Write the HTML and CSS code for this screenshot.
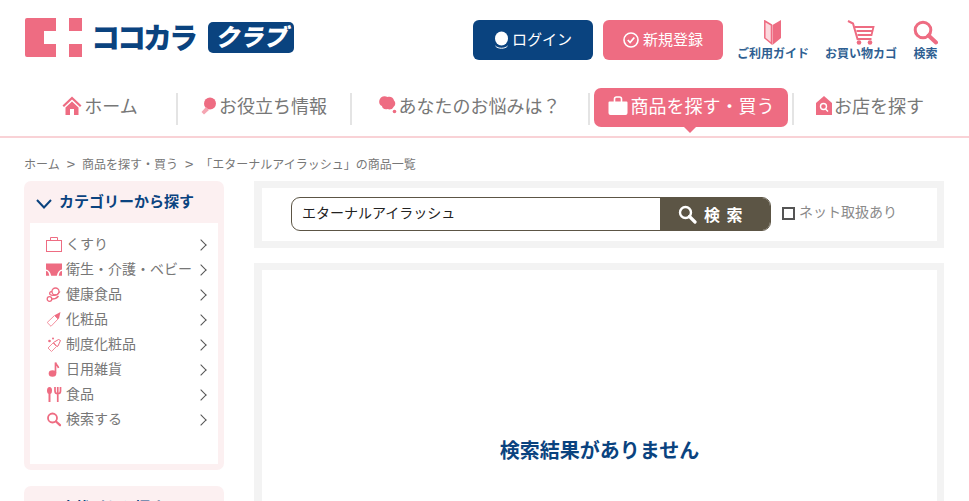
FILE: index.html
```html
<!DOCTYPE html>
<html lang="ja">
<head>
<meta charset="utf-8">
<title>ココカラクラブ</title>
<link rel="stylesheet" href="styles.css">
</head>
<body>
<header class="top">
  <a class="logo">
    <svg class="logo-mark" width="57" height="39" viewBox="0 0 57 39"><path d="M2 0H31V13H19V26H31V39H2a2 2 0 0 1-2-2V2a2 2 0 0 1 2-2z" fill="#ee6c82"/><rect x="44" y="0" width="13" height="13" fill="#ee6c82"/><rect x="44" y="26" width="13" height="13" fill="#ee6c82"/></svg>
    <span class="logo-text">ココカラ</span>
    <span class="logo-badge">クラブ</span>
  </a>
  <div class="top-actions">
    <a class="btn btn-login"><svg width="15" height="19" viewBox="0 0 15 19"><ellipse cx="7.500" cy="7.500" rx="6.500" ry="7" fill="#fff"/><path d="M1.500 15c2.500 3 9.500 3 12 0" stroke="#fff" fill="none"/></svg><span class="btn-text">ログイン</span></a>
    <a class="btn btn-register"><svg width="16" height="16" viewBox="0 0 16 16"><circle cx="8" cy="8" r="7" fill="none" stroke="#fff" stroke-width="1.600"/><path d="M4.800 8l2.300 2.500 4.200-5" fill="none" stroke="#fff" stroke-width="1.800"/></svg><span class="btn-text">新規登録</span></a>
    <a class="tool"><svg width="17" height="25" viewBox="0 0 17 25"><path d="M0.800 1l6.700 4v18.500l-6.700-5.500z" fill="#fbd9de" stroke="#ee6c82" stroke-width="1.500"/><path d="M8.500 5L17 0v18l-8.500 7z" fill="#ee6c82"/></svg><span>ご利用ガイド</span></a>
    <a class="tool"><svg width="28" height="25" viewBox="0 0 28 25"><path d="M1 1l5 2.500 4.500 15.500h14" fill="none" stroke="#ee6c82" stroke-width="2"/><path d="M8 7h18.500l-2 8H10.500M9.500 11h15.500" fill="none" stroke="#ee6c82" stroke-width="1.800"/><circle cx="12" cy="22.500" r="2.300" fill="#ee6c82"/><circle cx="23" cy="22.500" r="2.300" fill="#ee6c82"/></svg><span>お買い物カゴ</span></a>
    <a class="tool"><svg width="25" height="25" viewBox="0 0 25 25"><circle cx="10" cy="10" r="7.800" fill="none" stroke="#ee6c82" stroke-width="3"/><path d="M15.500 15.500l7.500 7" stroke="#ee6c82" stroke-width="4" stroke-linecap="round"/></svg><span>検索</span></a>
  </div>
</header>
<nav class="gnav">
  <a class="gnav-item nav-home"><svg width="20" height="20" viewBox="0 0 20 20"><path d="M10 0.500L0.500 9.500l1.500 1.500L10 3.500l8 7.500 1.500-1.500z" fill="#ee6c82"/><path d="M3.500 11.500V19H8v-6h4v6h4.500v-7.500L10 5.500z" fill="#ee6c82"/></svg><span class="nav-text">ホーム</span></a>
  <a class="gnav-item nav-info"><svg width="18" height="20" viewBox="0 0 18 20"><circle cx="11" cy="7.500" r="6" fill="#ee6c82"/><path d="M7 11l3 3-5 4.500-2.500-2.500z" fill="#f5a5b2"/></svg><span class="nav-text">お役立ち情報</span></a>
  <a class="gnav-item nav-worry"><svg width="19" height="20" viewBox="0 0 19 20"><path d="M3 1.500C5 0 7.500 0 9.500 1c3-1 6 0.500 6.500 3.500 2 2 1.500 5-0.500 6.500-1 2.500-4 3-6 2-3 1-5.500-1-5.500-3C1 9 0 4.500 3 1.500z" fill="#ee6c82"/><circle cx="16.500" cy="15.500" r="1.800" fill="#ee6c82"/></svg><span class="nav-text">あなたのお悩みは？</span></a>
  <a class="gnav-item nav-current"><svg width="20" height="19" viewBox="0 0 20 19"><path d="M1.500 5.500h17a1 1 0 0 1 1 1V17a2 2 0 0 1-2 2h-15a2 2 0 0 1-2-2V6.500a1 1 0 0 1 1-1z" fill="#fff"/><path d="M6.500 6V3a2 2 0 0 1 2-2h3a2 2 0 0 1 2 2v3" fill="none" stroke="#fff" stroke-width="1.600"/></svg><span class="nav-text">商品を探す・買う</span></a>
  <a class="gnav-item nav-shop"><svg width="16" height="19" viewBox="0 0 16 19"><path d="M8 0L16 7v12H0V7z" fill="#ee6c82"/><circle cx="7.500" cy="10.500" r="3" fill="none" stroke="#fff" stroke-width="1.400"/><path d="M9.500 13l2.500 2.500" stroke="#fff" stroke-width="1.400"/></svg><span class="nav-text">お店を探す</span></a>
</nav>
<p class="crumbs"><span>ホーム</span><span class="crumb-sep">&gt;</span><span>商品を探す・買う</span><span class="crumb-sep">&gt;</span><span>「エターナルアイラッシュ」の商品一覧</span></p>
<div class="columns">
  <aside class="side">
    <section class="panel">
      <h2 class="panel-title"><svg width="16" height="10" viewBox="0 0 16 10"><path d="M1 1l7 7.500L15 1" fill="none" stroke="#0a437f" stroke-width="2"/></svg><span class="panel-text">カテゴリーから探す</span></h2>
      <ul class="cat-list">
        <li class="cat"><svg width="16" height="15" viewBox="0 0 16 15"><rect x="0.500" y="3.500" width="15" height="11" fill="none" stroke="#ee6c82"/><path d="M4.500 3.500V0.500h7v3" fill="none" stroke="#ee6c82"/></svg><span class="cat-label">くすり</span><i class="chev"></i></li>
        <li class="cat"><svg width="16" height="14" viewBox="0 0 17 14"><path d="M0 0h17v6.500c-2.500 0-4.500 2.500-5.500 6.500h-6C4.500 9 2.500 6.500 0 6.500z" fill="#ee6c82"/><path d="M0 8c2 0 3 2 3.500 5H0zM17 8c-2 0-3 2-3.500 5H17z" fill="#ee6c82"/></svg><span class="cat-label">衛生・介護・ベビー</span><i class="chev"></i></li>
        <li class="cat"><svg width="16" height="15" viewBox="0 0 16 15"><circle cx="9.500" cy="4.500" r="3.500" fill="none" stroke="#ee6c82" stroke-width="1.300"/><path d="M6 4.500c-2 0.500-3 1-2 3 2 1.500 7 1.500 10-3" fill="none" stroke="#ee6c82" stroke-width="1.300"/><circle cx="3.500" cy="12" r="2.300" fill="none" stroke="#ee6c82" stroke-width="1.300"/><path d="M6 12c3 0 5-1 6.500-3" fill="none" stroke="#ee6c82" stroke-width="1.300"/></svg><span class="cat-label">健康食品</span><i class="chev"></i></li>
        <li class="cat"><svg width="16" height="15" viewBox="0 0 15 15"><path d="M0.700 10.500L8 3.500l3.500 3.500L4.500 14.300z" fill="#fff" stroke="#f4919f"/><path d="M8.500 3l5.500-3-1.500 6.500-1 0.500-3-3z" fill="#ee6c82"/></svg><span class="cat-label">化粧品</span><i class="chev"></i></li>
        <li class="cat"><svg width="16" height="15" viewBox="0 0 15 15"><path d="M1.500 11l5-5 3.500 3.500-5 5z" fill="#fff" stroke="#f4919f"/><path d="M7 5.500l5-3 2 1-2.500 5.500-1 0.500z" fill="#fff" stroke="#ee6c82"/><circle cx="3" cy="4" r="1.300" fill="#ee6c82"/><circle cx="6.500" cy="1.500" r="1" fill="#ee6c82"/></svg><span class="cat-label">制度化粧品</span><i class="chev"></i></li>
        <li class="cat"><svg width="16" height="15" viewBox="0 0 15 15"><ellipse cx="6" cy="11.500" rx="3.800" ry="3.300" fill="#ee6c82"/><path d="M9 11V0.500c0.500 2.500 2.500 3 3 5.500" fill="none" stroke="#ee6c82" stroke-width="1.700"/></svg><span class="cat-label">日用雑貨</span><i class="chev"></i></li>
        <li class="cat"><svg width="16" height="15" viewBox="0 0 15 15"><ellipse cx="3" cy="3.500" rx="2.500" ry="3.500" fill="#ee6c82"/><path d="M3 6v9" stroke="#ee6c82" stroke-width="2"/><path d="M8.500 0v4a2.750 2.750 0 0 0 5.500 0V0M11.250 0v15" fill="none" stroke="#ee6c82" stroke-width="1.700"/></svg><span class="cat-label">食品</span><i class="chev"></i></li>
        <li class="cat"><svg width="16" height="15" viewBox="0 0 15 15"><circle cx="6" cy="6" r="4.500" fill="none" stroke="#ee6c82" stroke-width="1.800"/><path d="M9.500 9.500l4 3.700" stroke="#ee6c82" stroke-width="2.300" stroke-linecap="round"/></svg><span class="cat-label">検索する</span><i class="chev"></i></li>
      </ul>
    </section>
    <section class="panel panel-next"><h2 class="panel-title panel-title-next"><span class="panel-text">症状別から探す</span></h2></section>
  </aside>
  <main class="main">
    <form class="search-box">
      <div class="search-field">
        <span class="search-input">エターナルアイラッシュ</span>
        <span class="search-btn"><svg width="19" height="19" viewBox="0 0 19 19"><circle cx="7.500" cy="7.500" r="5.500" fill="none" stroke="#fff" stroke-width="2.400"/><path d="M11.500 11.500l5.500 5.500" stroke="#fff" stroke-width="3.200" stroke-linecap="round"/></svg><span>検 索</span></span>
      </div>
      <label class="net-check"><span class="checkbox"></span><span class="net-text">ネット取扱あり</span></label>
    </form>
    <section class="results"><p class="empty">検索結果がありません</p></section>
  </main>
</div>
</body>
</html>
```
FILE: styles.css
```css
* { box-sizing: border-box; }
html, body { margin: 0; padding: 0; }
body { height: 501px; overflow: hidden; background: #fff; color: #777; font-family: "Noto Sans CJK JP", "Noto Sans", sans-serif; }
a { color: inherit; text-decoration: none; }
ul { list-style: none; margin: 0; padding: 0; }
svg { flex: none; display: block; }

.top { display: flex; justify-content: space-between; height: 88px; padding: 18px 31px 0 25px; }
.logo { display: flex; align-items: flex-start; }
.logo-text { margin: 2px 0 0 9px; height: 32px; font-size: 29px; line-height: 32px; font-weight: 900; color: #0a437f; letter-spacing: -3px; }
.logo-badge { width: 86px; height: 31px; margin: 4px 0 0 13px; border-radius: 5px; background: #0a437f; color: #fff; font-size: 24px; line-height: 28px; font-weight: 900; font-style: italic; text-align: center; white-space: nowrap; }
.top-actions { display: flex; align-items: flex-start; padding-top: 2px; }
.btn { display: flex; align-items: center; justify-content: center; gap: 3px; width: 120px; height: 40px; border-radius: 6px; color: #fff; font-size: 15px; }
.btn-text { margin-top: -4px; }
.btn-login { background: #0a437f; }
.btn-register { margin-left: 10px; gap: 4px; background: #ee6c82; }
.tool { display: flex; flex-direction: column; align-items: center; height: 42px; margin-left: 16px; color: #2f5f92; font-size: 12px; line-height: 14px; font-weight: 700; }
.btn + .tool { margin-left: 14px; }
.tool svg { height: 25px; margin-bottom: 1px; }

.gnav { display: flex; align-items: stretch; height: 50px; padding-bottom: 11px; border-bottom: 2px solid #f9d2d6; font-size: 18px; }
.gnav-item { display: flex; flex: none; align-items: center; justify-content: center; gap: 2px; height: 39px; }
.gnav-item svg { margin-top: -4px; }
.nav-text { margin-top: -5px; }
.nav-home { width: 176px; padding-left: 24px; }
.nav-info, .nav-worry, .nav-shop { position: relative; }
.nav-info { width: 174px; }
.nav-worry { width: 238px; }
.nav-info::before, .nav-worry::before, .nav-shop::before { content: ""; position: absolute; left: 0; top: 5px; height: 32px; border-left: 2px solid #e4e4e4; }
.nav-worry::after { content: ""; position: absolute; right: -2px; top: 5px; height: 32px; border-left: 2px solid #e4e4e4; }
.nav-current { position: relative; gap: 3px; width: 194px; margin-left: 6px; background: #ee6c82; border-radius: 7px; color: #fff; }
.nav-current::after { content: ""; position: absolute; left: 90px; bottom: -6px; border: 6px solid transparent; border-top-color: #ee6c82; border-bottom: 0; }
.nav-shop { width: 156px; margin-left: 4px; }

.crumbs { display: flex; align-items: center; gap: 7px; margin: 0; padding: 8px 0 0 24px; height: 43px; font-size: 12px; line-height: 16px; color: #777; }
.crumb-sep { font-size: 15px; }

.columns { display: flex; gap: 30px; padding: 0 25px 0 24px; }
.side { display: flex; flex-direction: column; gap: 16px; width: 200px; flex: none; }
.panel { padding: 0 6px 6px; background: #fcf0f1; border-radius: 7px; }
.panel-title { display: flex; align-items: center; gap: 7px; height: 42px; margin: 0; padding: 0 0 0 6px; color: #0a437f; font-size: 15px; font-weight: 700; }
.panel-title svg { margin-top: 3px; }
.panel-text { margin-top: -4px; }
.cat-list { height: 241px; padding-top: 9px; background: #fff; }
.cat { display: flex; align-items: center; height: 25px; padding: 0 13px 0 16px; font-size: 14px; }
.cat-label { flex: 1; margin: -4px 0 0 4px; white-space: nowrap; }
.chev { width: 8px; height: 8px; flex: none; border-top: 1.500px solid #555; border-right: 1.500px solid #555; transform: rotate(45deg); }
.panel-next { height: 40px; }
.panel-title-next { padding: 3px 0 0 30px; }

.main { flex: 1; display: flex; flex-direction: column; gap: 15px; }
.search-box { display: flex; align-items: flex-start; height: 67px; margin: 0; padding: 9px 0 0 29px; border: 7px solid #f3f3f3; border-left-width: 8px; }
.search-field { display: flex; width: 480px; height: 34px; border: 1px solid #5c5545; border-radius: 9px; overflow: hidden; }
.search-input { flex: 1; padding-left: 10px; color: #222; font-size: 14px; line-height: 29px; }
.search-btn { display: flex; align-items: center; justify-content: center; gap: 7px; width: 110px; padding-right: 8px; background: #5c5545; color: #fff; font-size: 16px; font-weight: 700; letter-spacing: 1.500px; line-height: 28px; }
.net-check { display: flex; align-items: flex-start; gap: 4px; margin-left: 11px; color: #8a8a8a; font-size: 14px; }
.checkbox { width: 13px; height: 13px; margin-top: 10px; border: 2px solid #555; }
.net-text { line-height: 28px; }
.results { height: 400px; padding-top: 165px; border: 7px solid #f3f3f3; border-left-width: 8px; }
.empty { margin: 0; color: #0a437f; font-size: 20px; line-height: 30px; font-weight: 700; text-align: center; }
```
